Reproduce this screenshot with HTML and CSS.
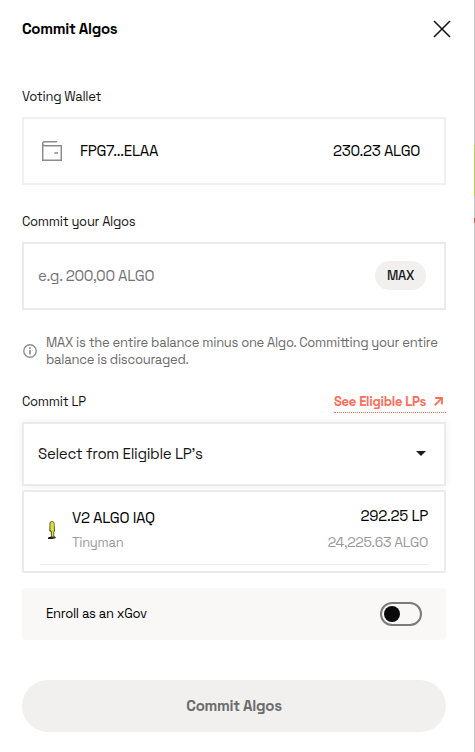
FILE: index.html
```html
<!DOCTYPE html>
<html lang="en">
<head>
<meta charset="utf-8" />
<title>Commit Algos</title>
<link rel="stylesheet" href="styles.css">
</head>
<body>
<div class="modal">
	<div class="header">
		<h1 class="title">Commit Algos</h1>
		<svg class="close" width="18" height="18" viewBox="0 0 18 18"><path d="M1 1L17 17M17 1L1 17" stroke="#161616" stroke-width="1.6" fill="none"/></svg>
	</div>

	<div class="label label-wallet">Voting Wallet</div>
	<div class="box wallet">
		<svg class="wallet-icon" width="20" height="20" viewBox="0 0 20 20" fill="none" stroke="#8c8c8c" stroke-width="1.5"><path d="M15 .7H2.6C1.4 .7 .7 1.5 .7 2.6S1.4 4.7 2.6 4.7H19.3V19.3H.7V2.6M12.3 12H16"/></svg>
		<span class="address">FPG7...ELAA</span>
		<span class="balance">230.23 ALGO</span>
	</div>

	<div class="label label-algos">Commit your Algos</div>
	<div class="box amount">
		<span class="placeholder">e.g. 200,00 ALGO</span>
		<button class="max">MAX</button>
	</div>

	<div class="note">
		<svg class="info" width="14" height="14" viewBox="0 0 14 14"><circle cx="7" cy="7" r="6.2" fill="none" stroke="#8f8f8f" stroke-width="1.4"/><path d="M7 3.3V4.9M7 6V10.4" stroke="#8f8f8f" stroke-width="1.7"/></svg>
		<p class="note-text">MAX is the entire balance minus one Algo. Committing your entire<br>balance is discouraged.</p>
	</div>

	<div class="lp-head">
		<span class="lp-label">Commit LP</span>
		<a class="eligible">See Eligible LPs<svg width="9" height="9" viewBox="0 0 9 9" fill="none" stroke="#ff6b57" stroke-width="1.8"><path d="M.7 8.3L7.8 1.2M1.2 1H8V7.6"/></svg></a>
	</div>
	<div class="select">
		<span class="select-text">Select from Eligible LP’s</span>
		<svg width="10" height="5" viewBox="0 0 10 5"><path d="M0 0H10L5 5Z" fill="#1c1c1c"/></svg>
	</div>
	<div class="list">
		<div class="lp">
			<svg class="token" width="10" height="20" viewBox="0 0 10 20"><path d="M1 17.5L4 16.5H8L9 18L5 19H1Z" fill="#171910"/><path d="M2.6 2.5Q5 -.5 7.4 2.5L8 11L7.2 12V16.5L8 17.5H4L3.8 12L2.3 11Z" fill="#4b5315"/><path d="M3.4 3Q5 .3 6.8 3L7 10.5L6.4 12V16.5H4.8V11.5L3.3 10Z" fill="#d5e048"/></svg>
			<div class="lp-name">
				<span>V2 ALGO IAQ</span>
				<span class="dex">Tinyman</span>
			</div>
			<div class="lp-value">
				<span>292.25 LP</span>
				<span class="algo-value">24,225.63 ALGO</span>
			</div>
		</div>
	</div>

	<div class="enroll">
		<span class="enroll-text">Enroll as an xGov</span>
		<span class="toggle"><span class="knob"></span></span>
	</div>

	<button class="submit">Commit Algos</button>
</div>
<div class="edge"></div>
</body>
</html>
```
FILE: styles.css
```css
* {
	box-sizing: border-box;
	letter-spacing: -0.02em;
}

body {
	margin: 0;
	display: flex;
	height: 752px;
	overflow: hidden;
	background: #fff;
	color: #161616;
	font-family: "Space Grotesk", Inter, sans-serif;
	font-size: 13px;
	white-space: nowrap;
}

svg {
	display: block;
	flex: none;
}

button {
	border: 0;
	padding: 0;
	font-family: inherit;
	background: #f1f0ef;
}

.modal {
	width: 474px;
	padding: 0 28px 0 22px;
}

/* strip of the page behind the modal */
.edge {
	width: 1px;
	background: linear-gradient(#c6c6c6 145px, #b5cf50 145px, #b5cf50 196px, #c6c6c6 196px, #c6c6c6 218px, #c8643f 218px, #c8643f 223px, #c6c6c6 223px);
}

.header {
	display: flex;
	justify-content: space-between;
	align-items: center;
	height: 58px;
	margin-right: -5px;
}

.title {
	margin: 0;
	padding-bottom: 2px;
	font-size: 15px;
	font-weight: 700;
	color: #000;
}

.label {
	display: flex;
	align-items: center;
	height: 20px;
	padding-bottom: 2px;
}

.label-wallet {
	margin-top: 29px;
}

.label-algos {
	margin-top: 27px;
}

.box {
	display: flex;
	align-items: center;
	height: 68px;
	margin-top: 10px;
	border: 2px solid #ebebeb;
}

.wallet {
	padding: 0 24px 0 18px;
	border-color: #f0f0f0;
	font-size: 15px;
	color: #000;
}

.address,
.balance,
.placeholder,
.lp-label,
.select-text,
.enroll-text {
	padding-bottom: 2px;
}

.address {
	margin-left: 18px;
}

.balance {
	margin-left: auto;
}

.amount {
	justify-content: space-between;
	padding: 0 18px 0 14px;
	font-size: 15px;
}

.placeholder {
	color: #757575;
}

.max {
	width: 51px;
	height: 29px;
	margin-bottom: 1px;
	border-radius: 15px;
	font-size: 13px;
	font-weight: 500;
	color: #161616;
}

.note {
	display: flex;
	align-items: center;
	gap: 9px;
	height: 34px;
	margin-top: 24px;
	padding-left: 1px;
	color: #6b6b6b;
}

.note-text {
	margin: 0;
	line-height: 17px;
}

.lp-head {
	display: flex;
	justify-content: space-between;
	align-items: center;
	height: 22px;
	margin-top: 23px;
}

.eligible {
	display: flex;
	align-items: center;
	justify-content: space-between;
	width: 112px;
	height: 22px;
	padding-right: 3px;
	border-bottom: 1px dotted #ff6b57;
	color: #ff6b57;
	font-weight: 600;
}

.eligible svg {
	margin-bottom: 1px;
}

.select {
	display: flex;
	align-items: center;
	justify-content: space-between;
	height: 64px;
	margin-top: 9px;
	padding: 0 18px 0 14px;
	border: 2px solid #ebebeb;
	box-shadow: 0 0 8px rgba(0, 0, 0, 0.07);
	font-size: 15px;
}

.select svg {
	margin-bottom: 1px;
}

.list {
	height: 83px;
	margin-top: 4px;
	padding: 0 16px;
	border: 2px solid #ebebeb;
	border-radius: 2px;
}

.lp {
	display: flex;
	align-items: center;
	height: 73px;
	padding-left: 7px;
	border-bottom: 1px solid #ebebeb;
}

.lp-name,
.lp-value {
	display: flex;
	flex-direction: column;
	font-size: 15px;
	line-height: 25px;
	color: #000;
}

.token {
	margin-top: 3px;
}

.lp-name {
	margin-left: 15px;
	padding-top: 3px;
}

.lp-value {
	margin-left: auto;
	padding-top: 2px;
	align-items: flex-end;
	line-height: 26px;
}

.dex,
.algo-value {
	font-size: 13px;
	color: #999;
}

.algo-value {
	font-size: 14px;
}

.enroll {
	display: flex;
	align-items: center;
	justify-content: space-between;
	height: 52px;
	margin-top: 15px;
	padding: 0 24px;
	border-radius: 4px;
	background: #f9f8f7;
	color: #000;
}

.toggle {
	display: flex;
	align-items: center;
	width: 42px;
	height: 24px;
	padding-left: 2px;
	border: 2px solid #7d7b7a;
	border-radius: 12px;
}

.knob {
	width: 16px;
	height: 16px;
	border-radius: 50%;
	background: #0a0a0a;
}

.submit {
	display: block;
	width: 424px;
	height: 52px;
	margin-top: 40px;
	padding-bottom: 2px;
	border-radius: 26px;
	font-size: 15px;
	font-weight: 700;
	color: #6b6b6b;
}
```
